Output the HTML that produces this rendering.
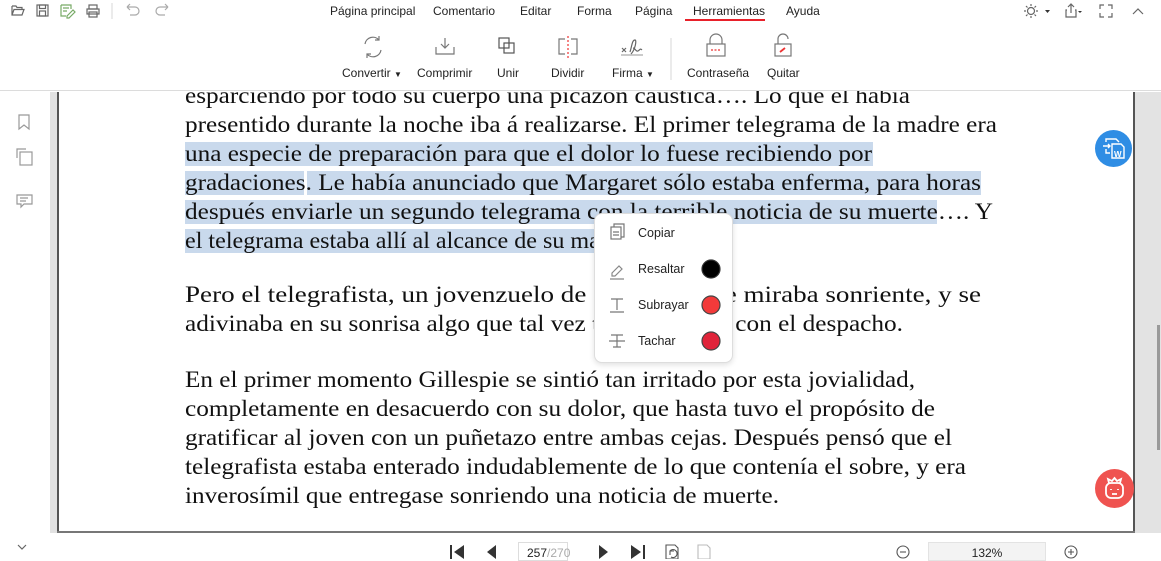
<!DOCTYPE html>
<html><head><meta charset="utf-8"><style>
*{margin:0;padding:0;box-sizing:border-box}
body{width:1161px;height:559px;overflow:hidden;background:#fff;font-family:"Liberation Sans",sans-serif;position:relative;color:#222}
.a{position:absolute}
.tab{position:absolute;top:4px;font-size:12px;color:#222}
.lbl{position:absolute;top:66px;font-size:12px;color:#222}
.mi{position:absolute;left:638px;font-size:12.5px;color:#222}
</style></head><body>
<div class="a" style="left:50px;top:92px;width:8px;height:445px;background:#e2e2e2"></div>
<div class="a" style="left:57px;top:92px;width:2px;height:442px;background:#555"></div>
<div class="a" style="left:1133px;top:92px;width:2px;height:442px;background:#555"></div>
<div class="a" style="left:1135px;top:92px;width:26px;height:445px;background:#e3e3e3"></div>
<div class="a" style="left:1157px;top:325px;width:3px;height:125px;background:#9a9a9a"></div>
<div class="a" style="left:57px;top:531px;width:1078px;height:2px;background:#777"></div>
<div class="a" style="left:0;top:533px;width:1161px;height:4px;background:#fff"></div>

<svg class="a" style="left:0;top:0" width="1161" height="559">
<g fill="#c9d9ec">
<rect x="185" y="142" width="688" height="24"/>
<rect x="185" y="171" width="119" height="24"/>
<rect x="307" y="171" width="674" height="24"/>
<rect x="185" y="200" width="752" height="24"/>
<rect x="185" y="229" width="415" height="24"/>
</g>
<g font-family="Liberation Serif" font-size="23" fill="#111">
<text x="185" y="103" textLength="725" lengthAdjust="spacingAndGlyphs">esparciendo por todo su cuerpo una picazón cáustica…. Lo que él había</text>
<text x="185" y="132" textLength="812" lengthAdjust="spacingAndGlyphs">presentido durante la noche iba á realizarse. El primer telegrama de la madre era</text>
<text x="185" y="161" textLength="687" lengthAdjust="spacingAndGlyphs">una especie de preparación para que el dolor lo fuese recibiendo por</text>
<text x="185" y="190" textLength="796" lengthAdjust="spacingAndGlyphs">gradaciones. Le había anunciado que Margaret sólo estaba enferma, para horas</text>
<text x="185" y="219" textLength="808" lengthAdjust="spacingAndGlyphs">después enviarle un segundo telegrama con la terrible noticia de su muerte…. Y</text>
<text x="185" y="248" textLength="445" lengthAdjust="spacingAndGlyphs">el telegrama estaba allí al alcance de su mano.</text>
<text x="185" y="302" textLength="796" lengthAdjust="spacingAndGlyphs">Pero el telegrafista, un jovenzuelo de ojos vivos, le miraba sonriente, y se</text>
<text x="185" y="331" textLength="718" lengthAdjust="spacingAndGlyphs">adivinaba en su sonrisa algo que tal vez tenía relación con el despacho.</text>
<text x="185" y="387" textLength="730" lengthAdjust="spacingAndGlyphs">En el primer momento Gillespie se sintió tan irritado por esta jovialidad,</text>
<text x="185" y="416" textLength="750" lengthAdjust="spacingAndGlyphs">completamente en desacuerdo con su dolor, que hasta tuvo el propósito de</text>
<text x="185" y="445" textLength="767" lengthAdjust="spacingAndGlyphs">gratificar al joven con un puñetazo entre ambas cejas. Después pensó que el</text>
<text x="185" y="474" textLength="781" lengthAdjust="spacingAndGlyphs">telegrafista estaba enterado indudablemente de lo que contenía el sobre, y era</text>
<text x="185" y="503" textLength="594" lengthAdjust="spacingAndGlyphs">inverosímil que entregase sonriendo una noticia de muerte.</text>
</g>
</svg>

<div class="a" style="left:0;top:0;width:1161px;height:91px;background:#fff;border-bottom:1px solid #dcdcdc"></div>
<svg class="a" style="left:0;top:0" width="1161" height="91" fill="none" stroke="#666" stroke-width="1.2">
<path d="M12 6h4l1 1.5h5v2M12 6v9h10l2-5.5H14l-2 5.5"/>
<rect x="37" y="5" width="11" height="11"/><rect x="39.5" y="5" width="6" height="3.5"/><rect x="39.5" y="11" width="6" height="5"/>
<path d="M61 5h10v4M61 5v11h5M63 8h6M63 11h4M67 16l6-6 2 2-6 6h-2z" stroke="#7a6"/>
<rect x="87" y="9" width="12" height="5"/><rect x="89" y="5" width="8" height="4"/><rect x="89" y="12" width="8" height="5"/>
<path d="M112 3v16" stroke="#ddd"/>
<path d="M127 7h8a4 4 0 0 1 0 8h-5M127 7l3-3M127 7l3 3" stroke="#aaa"/>
<path d="M168 7h-8a4 4 0 0 0 0 8h5M168 7l-3-3M168 7l-3 3" stroke="#aaa"/>
<circle cx="1031" cy="11" r="3.5"/><path d="M1031 4v2M1031 16v2M1024 11h2M1036 11h2M1026 6l1.5 1.5M1034.5 14.5l1.5 1.5M1026 16l1.5-1.5M1034.5 7.5l1.5-1.5"/>
<path d="M1045 10h5l-2.5 3z" fill="#333" stroke="none"/>
<path d="M1067 10h-1v7h10v-7h-1M1071 4v9M1068 7l3-3 3 3"/>
<path d="M1078 11h4l-2 2z" fill="#333" stroke="none"/>
<path d="M1100 9V5h4M1108 5h4v4M1112 13v4h-4M1104 17h-4v-4"/>
<path d="M1133 14l5-5 5 5"/>
<path d="M365 44a8 8 0 0 1 14-4M381 50a8 8 0 0 1-14 4M379 36v4h-4M367 58v-4h4" stroke="#777"/>
<path d="M445 38v10M441 44l4 4 4-4M436 47v7h18v-7" stroke="#777"/>
<rect x="499" y="38" width="10" height="10" stroke="#555"/><rect x="504" y="43" width="10" height="10" stroke="#555"/>
<path d="M565 39h-6v15h6M571 39h6v15h-6" stroke="#777"/><path d="M568 36v22" stroke="#e33" stroke-dasharray="2 2"/>
<path d="M622 52l4-4M626 52l-4-4M630 52c2-6 2-12 5-12 2 0 0 10-4 14M633 48c2 0 3 4 5 3s2-3 4-1" stroke="#666"/><path d="M621 55h22" stroke="#aaa"/>
<path d="M671 38v42" stroke="#ddd"/>
<rect x="707" y="44" width="18" height="12" stroke="#777"/><path d="M710 44v-4a6 6 0 0 1 12 0v4" stroke="#777"/><path d="M711 50h10" stroke="#e33" stroke-dasharray="2 1.5"/>
<rect x="775" y="44" width="16" height="12" stroke="#777"/><path d="M778 44v-5a5 5 0 0 1 10 0" stroke="#777"/><path d="M780 52l5-4" stroke="#e33" stroke-width="1.8"/>
</svg>
<div class="tab" style="left:330px">Página principal</div>
<div class="tab" style="left:433px">Comentario</div>
<div class="tab" style="left:520px">Editar</div>
<div class="tab" style="left:577px">Forma</div>
<div class="tab" style="left:635px">Página</div>
<div class="tab" style="left:693px">Herramientas</div>
<div class="a" style="left:685px;top:19px;width:80px;height:2px;background:#e8202a"></div>
<div class="tab" style="left:786px">Ayuda</div>
<div class="lbl" style="left:342px">Convertir <span style="font-size:8px">▼</span></div>
<div class="lbl" style="left:417px">Comprimir</div>
<div class="lbl" style="left:497px">Unir</div>
<div class="lbl" style="left:551px">Dividir</div>
<div class="lbl" style="left:612px">Firma <span style="font-size:8px">▼</span></div>
<div class="lbl" style="left:687px">Contraseña</div>
<div class="lbl" style="left:767px">Quitar</div>

<svg class="a" style="left:0;top:92px" width="50" height="467" fill="none" stroke="#999" stroke-width="1.2">
<path d="M19 23v14l5-4 5 4V23z"/>
<path d="M17 66v-9h9"/><rect x="20" y="60" width="12" height="13"/>
<path d="M17 103h15v9h-8l-3 3v-3h-4zM20 106h8M20 109h6"/>
<path d="M18 453l4 4 4-4" stroke="#666"/>
</svg>

<div class="a" style="left:1095px;top:130px;width:37px;height:37px;border-radius:50%;background:#2f8de4"></div>
<svg class="a" style="left:1095px;top:130px" width="37" height="37" fill="none" stroke="#fff" stroke-width="1.4">
<path d="M11 12v-3h10l3 3M11 19v4h4M8 16h7M13 14l2 2-2 2"/><path d="M17 14h9l3 3v11H17z"/><text x="19" y="27" font-size="8" font-weight="bold" fill="#fff" stroke="none" font-family="Liberation Sans">W</text>
</svg>
<div class="a" style="left:1095px;top:469px;width:39px;height:39px;border-radius:50%;background:#ef5350"></div>
<svg class="a" style="left:1095px;top:469px" width="39" height="39" fill="none" stroke="#fff" stroke-width="1.8">
<rect x="11" y="14" width="17" height="15" rx="5"/><path d="M14 14l-1-4 4 2 2.5-3 2.5 3 4-2-1 4"/><path d="M16 20v1M23 20v1M17 25h5"/>
</svg>

<div class="a" style="left:594px;top:213px;width:139px;height:150px;background:#fff;border:1px solid #ddd;border-radius:8px;box-shadow:0 2px 6px rgba(0,0,0,.12)"></div>
<svg class="a" style="left:594px;top:213px" width="139" height="150" fill="none" stroke="#777" stroke-width="1.2">
<path d="M20 14v-3h10v13h-3"/><rect x="17" y="14" width="10" height="12"/><path d="M19 19h6M19 22h6"/>
<path d="M18 60l7-7 3 3-7 7h-3zM16 66h14" stroke="#888"/>
<path d="M17 86h12M23 86v11M16 99h14"/>
<path d="M17 122h12M23 122v12M15 128h16M19 134h8"/>
<circle cx="117" cy="56" r="9" fill="#000" stroke="#333"/>
<circle cx="117" cy="92" r="9" fill="#f23a3a" stroke="#444"/>
<circle cx="117" cy="128" r="9" fill="#e0243a" stroke="#444"/>
</svg>
<div class="mi" style="top:226px">Copiar</div>
<div class="mi" style="top:262px">Resaltar</div>
<div class="mi" style="top:298px">Subrayar</div>
<div class="mi" style="top:334px">Tachar</div>

<svg class="a" style="left:0;top:537px" width="1161" height="22" fill="#333">
<rect x="450" y="8" width="2" height="14"/><path d="M464 8v14l-10-7z"/>
<path d="M496 8v14l-9-7z"/>
<path d="M599 8v14l9-7z"/>
<path d="M631 8v14l10-7z"/><rect x="643" y="8" width="2" height="14"/>
<g fill="none" stroke="#555" stroke-width="1.1"><path d="M666 8h9l3 3v11h-12z"/><path d="M674 14h-4v4M670 14a4 4 0 1 1 1 6"/>
<path d="M698 8h9l3 3v11h-12z" stroke="#bbb"/>
<circle cx="903" cy="15" r="6"/><path d="M900 15h6"/>
<circle cx="1071" cy="15" r="6"/><path d="M1068 15h6M1071 12v6"/></g>
</svg>
<div class="a" style="left:518px;top:542px;width:50px;height:19px;border:1px solid #ddd;font-size:12px;padding:3px 0 0 8px">257<span style="color:#aaa">/270</span></div>
<div class="a" style="left:928px;top:542px;width:118px;height:19px;background:#f3f3f3;border:1px solid #e3e3e3;font-size:12px;text-align:center;padding-top:3px">132%</div>
</body></html>
